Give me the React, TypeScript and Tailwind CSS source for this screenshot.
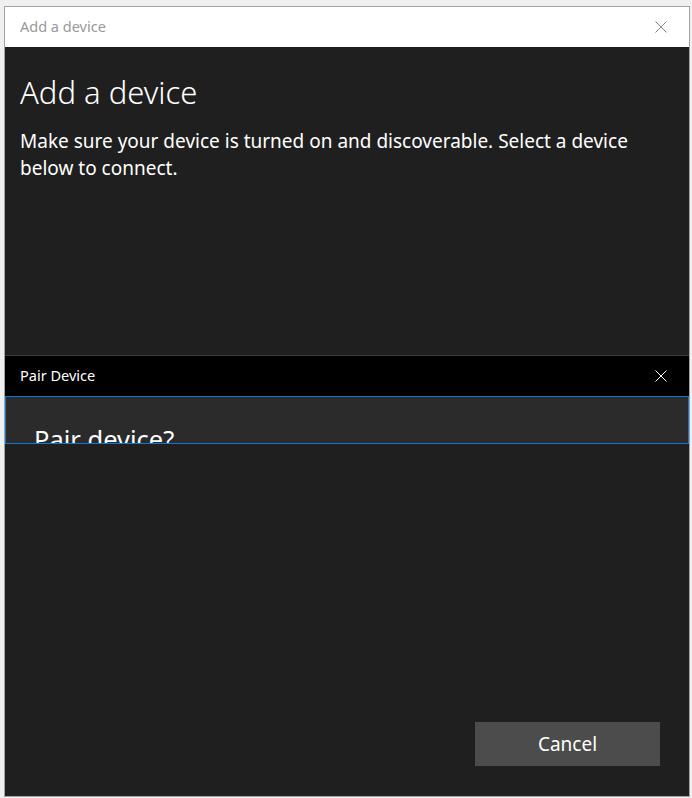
import React from "react";

const CloseIcon: React.FC<{ className?: string }> = ({ className }) => (
  <svg className={className} width="12" height="12" viewBox="0 0 12 12" fill="none">
    <path d="M0.5 0.5 L11.5 11.5 M11.5 0.5 L0.5 11.5" stroke="currentColor" strokeWidth="1" />
  </svg>
);

const App: React.FC = () => {
  return (
    <div
      className="h-[798px] w-[692px] bg-[#f0f0f0] pl-[4px] pt-[6px] overflow-hidden"
      style={{ fontFamily: '"Noto Sans", "Open Sans", sans-serif' }}
    >
      <div className="flex h-[791px] w-[686px] flex-col border border-[#a3a3a3] bg-[#1f1f1f]">
        {/* title bar */}
        <div className="flex h-[40px] shrink-0 items-center justify-between bg-white pl-[15px] pr-[22px]">
          <span className="text-[14.5px] text-[#999999]">Add a device</span>
          <CloseIcon className="text-[#8a8a8a]" />
        </div>

        {/* body */}
        <div className="flex flex-1 flex-col">
          <div className="px-[15px] pt-[25px] text-white">
            <h1 className="text-[31px] font-light leading-[40px]">Add a device</h1>
            <p className="mt-[16px] text-[19px] leading-[27px]">
              Make sure your device is turned on and discoverable. Select a device below to connect.
            </p>
          </div>

          {/* pair device overlay */}
          <div className="mt-[173px] border-t border-[#3a3a3a]">
            <div className="flex h-[40px] items-center justify-between bg-black pl-[15px] pr-[22px]">
              <span className="text-[14.5px] text-white">Pair Device</span>
              <CloseIcon className="text-white" />
            </div>
            <div className="h-[48px] overflow-hidden border border-[#0f78d4] bg-[#2b2b2b] pl-[28px] pt-[25px]">
              <span className="block text-[25.5px] leading-[34px] text-white">Pair device?</span>
            </div>
          </div>

          <div className="flex-1" />

          <div className="flex justify-end pb-[30px] pr-[29px]">
            <button className="h-[44px] w-[185px] bg-[#4c4c4c] text-[19px] text-white">Cancel</button>
          </div>
        </div>
      </div>
    </div>
  );
};

export default App;
